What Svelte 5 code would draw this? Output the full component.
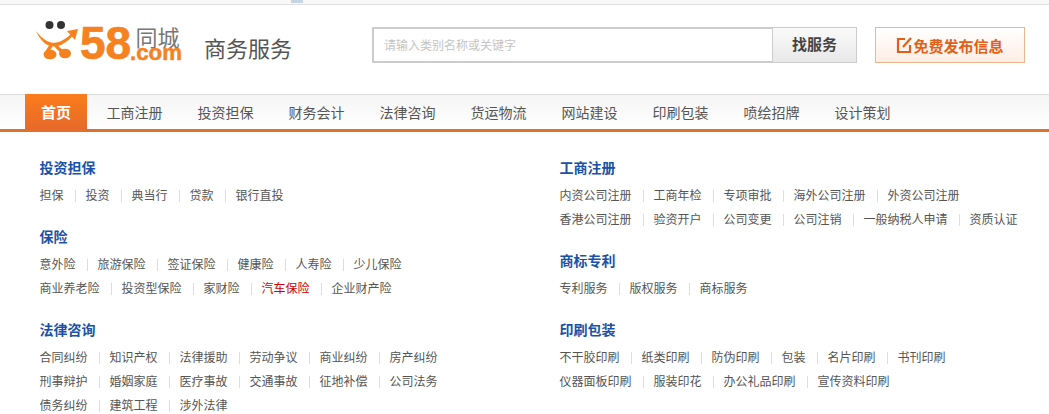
<script>
    const nav = ['工商注册', '投资担保', '财务会计', '法律咨询', '货运物流', '网站建设', '印刷包装', '喷绘招牌', '设计策划'];

    const left = [
        { title: '投资担保', rows: [['担保', '投资', '典当行', '贷款', '银行直投']] },
        { title: '保险', rows: [
            ['意外险', '旅游保险', '签证保险', '健康险', '人寿险', '少儿保险'],
            ['商业养老险', '投资型保险', '家财险', '汽车保险', '企业财产险']
        ] },
        { title: '法律咨询', rows: [
            ['合同纠纷', '知识产权', '法律援助', '劳动争议', '商业纠纷', '房产纠纷'],
            ['刑事辩护', '婚姻家庭', '医疗事故', '交通事故', '征地补偿', '公司法务'],
            ['债务纠纷', '建筑工程', '涉外法律']
        ] }
    ];

    const right = [
        { title: '工商注册', rows: [
            ['内资公司注册', '工商年检', '专项审批', '海外公司注册', '外资公司注册'],
            ['香港公司注册', '验资开户', '公司变更', '公司注销', '一般纳税人申请', '资质认证']
        ] },
        { title: '商标专利', rows: [['专利服务', '版权服务', '商标服务']] },
        { title: '印刷包装', rows: [
            ['不干胶印刷', '纸类印刷', '防伪印刷', '包装', '名片印刷', '书刊印刷'],
            ['仪器面板印刷', '服装印花', '办公礼品印刷', '宣传资料印刷']
        ] }
    ];
</script>

<div class="page">
    <div class="topbar"><span class="topmark"></span></div>

    <header>
        <svg class="logo" width="150" height="56" viewBox="0 -8 150 56">
            <circle cx="14.5" cy="4" r="4" fill="#333" />
            <circle cx="26" cy="4" r="4" fill="#333" />
            <path d="M1 10 C4 14 7 17 12 20 C18 23 23 22 28 19 C32 17 35 14 39 10 L40.5 12 C36 17 32 21 27 23.5 C21 26.5 15 26 10 22.5 C6 19 3 15 1 10 Z" fill="#f5821f" />
            <path d="M32 10 L43 8 L40 19 Z" fill="#f5821f" />
            <path d="M17 23 L12 31 M20 23 C22 27 25 29 28 31" fill="none" stroke="#f5821f" stroke-width="3.4" />
            <ellipse cx="15" cy="33.5" rx="6.5" ry="4.8" fill="#f5821f" />
            <ellipse cx="30" cy="32.5" rx="6" ry="4.8" fill="#f5821f" />
            <text x="45" y="38" class="l58">58</text>
            <text x="100.5" y="25" class="lcn">同城</text>
            <text x="95" y="39" class="lcom" textLength="52" lengthAdjust="spacingAndGlyphs">.com</text>
        </svg>
        <div class="subject">商务服务</div>

        <div class="search">
            <div class="input">请输入类别名称或关键字</div>
            <div class="find">找服务</div>
        </div>

        <div class="post">
            <svg width="17" height="18" viewBox="0 0 17 18">
                <path d="M9 3 H2 V16 H14 V9" fill="none" stroke="#e0601a" stroke-width="2.2" />
                <path d="M7 11 L15 2" fill="none" stroke="#e0601a" stroke-width="2.2" />
            </svg>
            <span>免费发布信息</span>
        </div>
    </header>

    <nav>
        <div class="home">首页</div>
        <ul>
            {#each nav as item}
                <li>{item}</li>
            {/each}
        </ul>
    </nav>

    <main>
        {#each [left, right] as column}
            <div class="column">
                {#each column as group}
                    <section>
                        <h3>{group.title}</h3>
                        {#each group.rows as row}
                            <div class="row">
                                {#each row as link}
                                    <span class="link" class:red={link === '汽车保险'}>{link}</span>
                                {/each}
                            </div>
                        {/each}
                    </section>
                {/each}
            </div>
        {/each}
    </main>
</div>

<style>
    :global(body) {
        background: #fff;
    }

    .page {
        width: 1049px;
        height: 414px;
        overflow: hidden;
        font-family: "Liberation Sans", "Noto Sans CJK SC", sans-serif;
        color: #555;
    }

    .topbar {
        position: relative;
        height: 4px;
        background: #f8f8f8;
        border-bottom: 1px solid #ddd;
    }

    .topmark {
        position: absolute;
        left: 291px;
        top: 0;
        width: 12px;
        height: 3px;
        background: #c5d5e5;
    }

    header {
        display: flex;
        align-items: flex-start;
        height: 89px;
        box-sizing: border-box;
        padding: 15px 0 0 35px;
    }

    .logo {
        flex: none;
        margin-top: -7px;
    }

    .l58 {
        font: bold 46px "Liberation Sans", sans-serif;
        fill: #f5821f;
        stroke: #f5821f;
        stroke-width: 0.7px;
    }

    .lcn {
        font: 22px "Noto Sans CJK SC", sans-serif;
        fill: #777;
    }

    .lcom {
        font: bold 22px "Liberation Sans", sans-serif;
        fill: #f5821f;
        stroke: #f5821f;
        stroke-width: 0.5px;
    }

    .subject {
        margin: 16px 0 0 19px;
        width: 88px;
        font-size: 22px;
        line-height: 28px;
        color: #555;
    }

    .search {
        display: flex;
        height: 36px;
        margin: 7px 0 0 80px;
    }

    .input {
        width: 400px;
        box-sizing: border-box;
        border: 2px solid #ccc;
        border-right: 0;
        padding-left: 10px;
        font-size: 12px;
        line-height: 35px;
        color: #c4c4c4;
    }

    .find {
        width: 85px;
        box-sizing: border-box;
        border: 1px solid #ccc;
        background: linear-gradient(#fafafa, #e8e8e8);
        text-align: center;
        font-size: 15px;
        font-weight: bold;
        line-height: 33px;
        color: #444;
    }

    .post {
        display: flex;
        align-items: center;
        justify-content: center;
        width: 150px;
        height: 36px;
        box-sizing: border-box;
        margin: 7px 0 0 18px;
        border: 1px solid #f0b48e;
        background: linear-gradient(#fff, #fdeee4);
        font-size: 15px;
        font-weight: bold;
        color: #e0601a;
    }

    nav {
        display: flex;
        height: 34px;
        padding-left: 25px;
        border-top: 1px solid #ddd;
        border-bottom: 3px solid #e0702c;
        background: linear-gradient(#f5f5f5, #fff);
    }

    .home {
        width: 62px;
        margin-top: -1px;
        height: 35px;
        background: linear-gradient(#fb7d1a, #e8682a);
        text-align: center;
        font-size: 15px;
        font-weight: bold;
        line-height: 37px;
        color: #fff;
    }

    ul {
        display: flex;
        gap: 35px;
        margin: 0;
        padding: 0 0 0 19.5px;
        list-style: none;
    }

    li {
        width: 56px;
        white-space: nowrap;
        font-size: 14px;
        line-height: 36px;
        color: #555;
    }

    main {
        display: grid;
        grid-template-columns: 520px 1fr;
        padding: 24px 0 0 39.5px;
    }

    section {
        margin-bottom: 17px;
    }

    h3 {
        margin: 0 0 4px;
        font-size: 14px;
        font-weight: bold;
        line-height: 24px;
        color: #1a52a8;
    }

    .row {
        display: flex;
        font-size: 12px;
        line-height: 24px;
        white-space: nowrap;
    }

    .link + .link {
        margin-left: 11px;
        padding-left: 11px;
        background: linear-gradient(#ddd, #ddd) left center / 1px 12px no-repeat;
    }

    .red {
        color: #c00;
    }
</style>
